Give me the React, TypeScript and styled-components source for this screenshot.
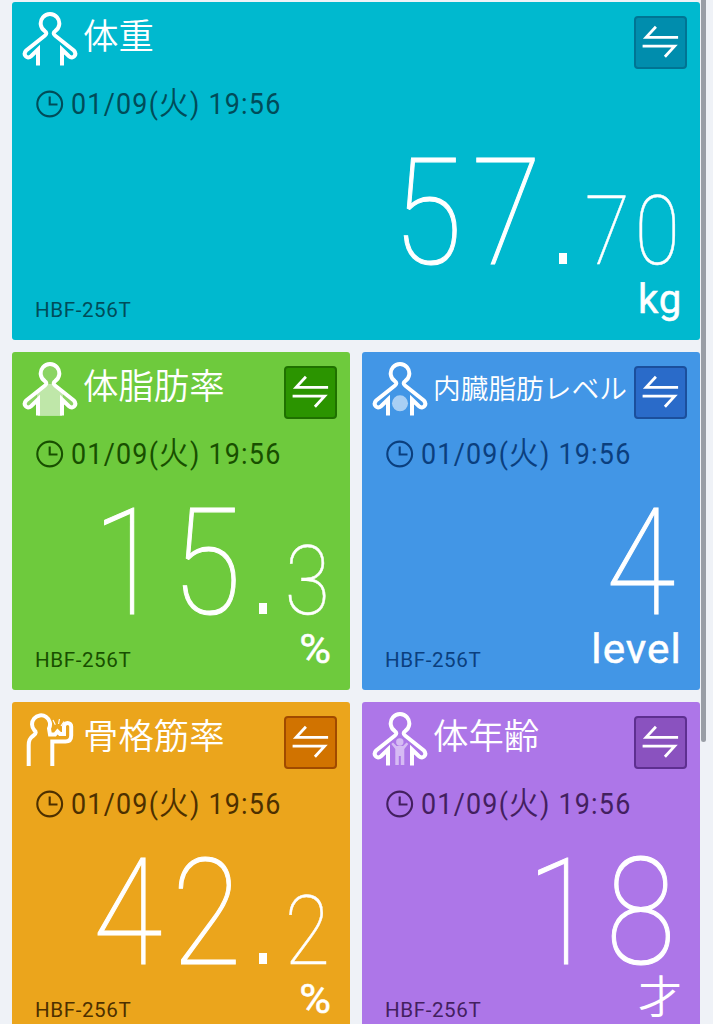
import React from "react";
import styled, { createGlobalStyle } from "styled-components";

const GlobalStyle = createGlobalStyle`
  html, body { margin: 0; height: 100%; overflow: hidden; background: #eff2f7; }
  *, *::before, *::after { box-sizing: border-box; }
`;

const Page = styled.main`
  position: relative;
  width: 713px;
  height: 1024px;
  overflow: hidden;
  padding: 2px 13px 0 12px;
  background: #eff2f7;
  font-family: Roboto, "Noto Sans CJK JP", sans-serif;
`;

const Grid = styled.div`
  display: grid;
  grid-template-columns: 338px 338px;
  grid-auto-rows: 338px;
  gap: 12px;
`;

const ScrollThumb = styled.div`
  position: absolute;
  top: -10px;
  right: 7px;
  width: 5px;
  height: 752px;
  border-radius: 3px;
  background: #999ea6;
`;

interface Theme {
  bg: string;
  ink: string;
  button: string;
  edge: string;
}

const Card = styled.section<{ $theme: Theme; $wide?: boolean }>`
  display: flex;
  flex-direction: column;
  grid-column: ${(p) => (p.$wide ? "span 2" : "span 1")};
  border-radius: 3px;
  overflow: hidden;
  background: ${(p) => p.$theme.bg};
  color: ${(p) => p.$theme.ink};
`;

const Header = styled.header`
  display: flex;
  align-items: flex-start;
  height: 82px;
  padding: 10px 13px 0 10px;
`;

const Title = styled.h2<{ $small?: boolean }>`
  flex: 1;
  margin: 0;
  padding-left: 5px;
  white-space: nowrap;
  color: #fff;
  font-family: "Noto Sans CJK JP", sans-serif;
  font-weight: 350;
  font-size: ${(p) => (p.$small ? "27.7px" : "35.4px")};
  line-height: ${(p) => (p.$small ? "51px" : "44px")};
`;

const SwapButton = styled.button<{ $theme: Theme }>`
  flex: none;
  width: 53px;
  height: 53px;
  margin-top: 4px;
  padding: 0;
  border: 2px solid ${(p) => p.$theme.edge};
  border-radius: 4px;
  background: ${(p) => p.$theme.button};
  svg { display: block; }
`;

const DateRow = styled.div`
  display: flex;
  align-items: center;
  gap: 7px;
  height: 40px;
  padding-left: 24px;
`;

const DateText = styled.time`
  font-size: 29px;
  line-height: 40px;
  letter-spacing: 1.3px;
  white-space: nowrap;
  transform: scaleX(0.928);
  transform-origin: left center;
`;

const Weekday = styled.span`
  font-family: "Noto Sans CJK JP", sans-serif;
  font-weight: 350;
  font-size: 32px;
  line-height: 30px;
`;

const Value = styled.div<{ $integer: boolean }>`
  display: flex;
  justify-content: flex-end;
  align-items: baseline;
  height: 152px;
  padding: 34px ${(p) => (p.$integer ? 21 : 19)}px 0 0;
  color: #fff;
  font-weight: 100;
`;

const Digit = styled.span<{ $small?: boolean }>`
  width: ${(p) => (p.$small ? 50 : 79)}px;
  text-align: center;
  font-size: ${(p) => (p.$small ? 97 : 149)}px;
  line-height: ${(p) => (p.$small ? 80 : 110)}px;
  -webkit-text-stroke: ${(p) => (p.$small ? 0.5 : 1.1)}px #fff;
  transform: scaleX(0.85);
`;

const Point = styled.span`
  width: 36px;
  display: flex;
  justify-content: center;
  &::before {
    content: "";
    width: 8px;
    height: 11px;
    background: #fff;
  }
`;

const Footer = styled.footer`
  display: flex;
  justify-content: space-between;
  align-items: flex-start;
  height: 64px;
  padding: 0 18px 0 23px;
`;

const Model = styled.span`
  margin-top: 21px;
  font-size: 21px;
  line-height: 27px;
  letter-spacing: 0.6px;
  transform: scaleX(0.98);
  transform-origin: left center;
`;

const Unit = styled.span<{ $sx: number; $cjk?: boolean }>`
  color: #fff;
  font-size: ${(p) => (p.$cjk ? 44 : 41)}px;
  line-height: ${(p) => (p.$cjk ? 45 : 47)}px;
  letter-spacing: ${(p) => (p.$cjk ? 0 : 1)}px;
  font-weight: ${(p) => (p.$cjk ? 350 : 400)};
  -webkit-text-stroke: ${(p) => (p.$cjk ? 0 : 0.5)}px #fff;
  transform: scaleX(${(p) => p.$sx});
  transform-origin: right center;
`;

type Kind = "plain" | "fat" | "visceral" | "muscle" | "age";

const BODY =
  "M38 65.5V49.5L31 56.2C27 59.8 22.4 54.5 26.2 50.5L45 35.5C47 34 46.5 32 45 31.2A9.3 9.3 0 1 1 55 31.2C53.5 32 53 34 55 35.5L73.8 50.5C77.6 54.5 73 59.8 69 56.2L62 49.5V65.5";

const BodyIcon = ({ kind }: { kind: Kind }) => (
  <svg width="56" height="56" viewBox="22 12 56 56" fill="none" stroke="#fff" strokeWidth="4">
    {kind === "muscle" ? (
      <>
        <path d="M28.7 66V45C28.7 40 30 38 33.5 35.5C36.5 33.5 36 31.5 34.5 30.5A9 9 0 1 1 49 28.5L50 34.5H55L57.5 31.5L60 34H64V26.5A3.6 3.6 0 0 1 71.2 26.5V35.5Q71.2 41.5 65.5 41.5H52.3V66" />
        <path d="M53 20L55.3 24.8M59.4 19L58.6 24M64 21.5L61 26" strokeWidth="1.1" />
      </>
    ) : (
      <>
        {kind === "fat" && (
          <>
            <path d={BODY} fill="#fff" fillOpacity="0.2" stroke="none" />
            <path d="M46 34H54L63 43L62 66H38L37 43Z" fill="#fff" fillOpacity="0.45" stroke="none" />
          </>
        )}
        {kind === "visceral" && (
          <circle cx="50" cy="53.3" r="8" fill="#fff" fillOpacity="0.55" stroke="none" />
        )}
        {kind === "age" && (
          <g fill="#fff" fillOpacity="0.5" stroke="none">
            <circle cx="49.8" cy="42" r="3.7" />
            <path d="M43 42.5L46.5 46H53L56.5 42.5L58.3 44L54.3 49V65H50.8V56H48.8V65H45.3V49L41.3 44Z" />
          </g>
        )}
        <path d={BODY} />
      </>
    )}
  </svg>
);

const SwapIcon = () => (
  <svg width="49" height="49" viewBox="2.4 2.2 49 49" fill="none" stroke="#fff" strokeWidth="2.8">
    <path d="M44.5 21.5H12.5L22.3 11M9 30.3H41L31.3 41" />
  </svg>
);

const ClockIcon = () => (
  <svg width="28" height="28" viewBox="0 0 28 28" fill="none" stroke="currentColor" strokeWidth="2.1">
    <circle cx="13.7" cy="14" r="12.4" />
    <path d="M13.7 6.5V14.5H21.5" />
  </svg>
);

interface Metric {
  title: string;
  kind: Kind;
  whole: string;
  fraction?: string;
  unit: string;
  unitScale: number;
  wide?: boolean;
  theme: Theme;
}

const METRICS: Metric[] = [
  { title: "体重", kind: "plain", whole: "57", fraction: "70", unit: "kg", unitScale: 0.98, wide: true,
    theme: { bg: "#00b9cf", ink: "#004c59", button: "#008dad", edge: "#007493" } },
  { title: "体脂肪率", kind: "fat", whole: "15", fraction: "3", unit: "%", unitScale: 1.06,
    theme: { bg: "#6eca3d", ink: "#184f00", button: "#2b9400", edge: "#1f7000" } },
  { title: "内臓脂肪レベル", kind: "visceral", whole: "4", unit: "level", unitScale: 1.03,
    theme: { bg: "#4296e6", ink: "#0b3f7e", button: "#2a6bc9", edge: "#1b4f9c" } },
  { title: "骨格筋率", kind: "muscle", whole: "42", fraction: "2", unit: "%", unitScale: 1.06,
    theme: { bg: "#eba51c", ink: "#4d3000", button: "#d17300", edge: "#a04a00" } },
  { title: "体年齢", kind: "age", whole: "18", unit: "才", unitScale: 1,
    theme: { bg: "#ad76e8", ink: "#43205f", button: "#8a52bf", edge: "#5e2f90" } },
];

const MetricCard = ({ m }: { m: Metric }) => (
  <Card $theme={m.theme} $wide={m.wide}>
    <Header>
      <BodyIcon kind={m.kind} />
      <Title $small={m.title.length > 5}>{m.title}</Title>
      <SwapButton $theme={m.theme} aria-label="切替">
        <SwapIcon />
      </SwapButton>
    </Header>
    <DateRow>
      <ClockIcon />
      <DateText>
        01/09(<Weekday>火</Weekday>) 19:56
      </DateText>
    </DateRow>
    <Value $integer={!m.fraction}>
      {m.whole.split("").map((d, i) => (
        <Digit key={i}>{d}</Digit>
      ))}
      {m.fraction && <Point />}
      {m.fraction?.split("").map((d, i) => (
        <Digit key={i} $small>{d}</Digit>
      ))}
    </Value>
    <Footer>
      <Model>HBF-256T</Model>
      <Unit $sx={m.unitScale} $cjk={m.unit === "才"}>{m.unit}</Unit>
    </Footer>
  </Card>
);

export default function App() {
  return (
    <>
      <GlobalStyle />
      <Page>
        <Grid>
          {METRICS.map((m) => (
            <MetricCard key={m.title} m={m} />
          ))}
        </Grid>
        <ScrollThumb />
      </Page>
    </>
  );
}
